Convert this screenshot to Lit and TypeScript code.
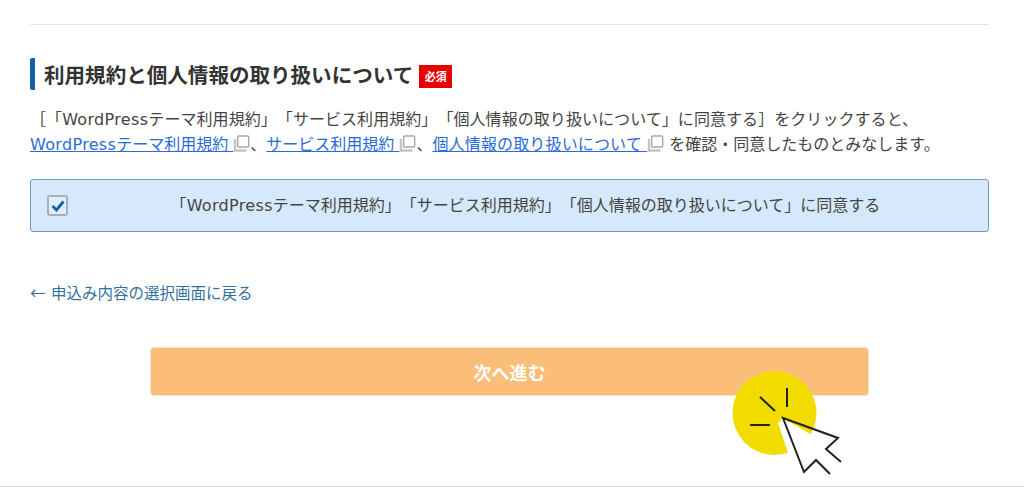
import { LitElement, css, html, svg } from 'lit';
import { customElement } from 'lit/decorators.js';

const copyIcon = svg`<svg class="copy" width="17" height="17" viewBox="0 0 17 17" aria-hidden="true">
  <path d="M2 4v11.5h11.5" fill="none" stroke="#c4c4c4" stroke-width="2.4"/>
  <rect x="4.7" y="1" width="11" height="11" rx="1" fill="#fff" stroke="#a8a8a8" stroke-width="1.4"/>
</svg>`;

const wp = html`<span class="wp">WordPress</span>`;

@customElement('app-root')
export class AppRoot extends LitElement {
  static override styles = css`
    :host {
      display: block;
      position: relative;
      height: 502px;
      overflow: hidden;
      background: #fff;
      font-family: 'DejaVu Sans', 'Noto Sans CJK JP', sans-serif;
      text-spacing-trim: space-all;
      color: #444;
    }
    .page {
      display: flex;
      flex-direction: column;
      height: 487px;
      box-sizing: border-box;
      padding: 24px 35px 0 30px;
      border-bottom: 1px solid #d9d9d9;
    }
    hr {
      margin: 0;
      border: none;
      border-top: 1px solid #e4e4e4;
    }
    .heading {
      display: flex;
      align-items: center;
      height: 32px;
      margin-top: 33px;
      padding-left: 9px;
      border-left: 5px solid #1360a8;
      border-radius: 2px;
    }
    h2 {
      margin: 0;
      padding-top: 4px;
      font-size: 20.55px;
      line-height: 28px;
      font-weight: 700;
      color: #333;
      white-space: nowrap;
    }
    .badge {
      display: flex;
      align-items: center;
      justify-content: center;
      width: 33px;
      height: 23px;
      margin: 4px 0 0 6px;
      background: #e60000;
      color: #fff;
      font-size: 11px;
      font-weight: 700;
      line-height: 1;
      font-family: 'Noto Sans CJK JP', serif;
    }
    .lead {
      margin: 17px 0 0;
      font-size: 16px;
      line-height: 25px;
      white-space: nowrap;
    }
    .first {
      letter-spacing: 0.06px;
    }
    .lead a {
      color: #2b6bd6;
      text-decoration: underline;
      white-space: pre;
    }
    .lead a.long {
      letter-spacing: 0.15px;
    }
    .wp {
      letter-spacing: 0.33px;
    }
    .copy {
      vertical-align: -2px;
    }
    .agree {
      display: flex;
      align-items: center;
      height: 53px;
      box-sizing: border-box;
      margin-top: 22px;
      padding: 0 17px 0 16px;
      background: #d6e8fc;
      border: 1px solid #6a9ad0;
      border-radius: 3px;
    }
    .box {
      display: flex;
      align-items: center;
      justify-content: center;
      flex: none;
      width: 21px;
      height: 21px;
      box-sizing: border-box;
      background: #e3edf9;
      border: 2px solid #a6b0bc;
      border-radius: 3px;
    }
    .label {
      flex: 1;
      text-align: center;
      font-size: 16px;
      line-height: 24px;
      padding-left: 12px;
      white-space: nowrap;
    }
    .back {
      margin-top: 48px;
      font-family: 'Noto Sans CJK JP', sans-serif;
      font-size: 15.5px;
      word-spacing: 2px;
      line-height: 25px;
      color: #33709f;
      text-decoration: none;
    }
    .next {
      display: flex;
      align-items: center;
      justify-content: center;
      align-self: flex-start;
      width: 719px;
      height: 49px;
      margin: 42px 0 0 120px;
      background: #fbbe78;
      border: 1px solid #f5e3d0;
      border-radius: 4px;
      box-sizing: border-box;
      color: #fff;
      font-family: inherit;
      font-size: 18px;
      font-weight: 700;
    }
    .pointer {
      position: absolute;
      left: 730px;
      top: 370px;
    }
  `;

  override render() {
    return html`
      <div class="page">
        <hr />
        <div class="heading">
          <h2>利用規約と個人情報の取り扱いについて</h2>
          <span class="badge">必須</span>
        </div>
        <p class="lead">
          <span class="first">［「${wp}テーマ利用規約」「サービス利用規約」「個人情報の取り扱いについて」に同意する］をクリックすると、</span><br />
          <a href="#">${wp}テーマ利用規約 </a>${copyIcon}、<a href="#">サービス利用規約 </a>${copyIcon}、<a class="long" href="#">個人情報の取り扱いについて </a>${copyIcon} を確認・同意したものとみなします。
        </p>
        <label class="agree">
          <div class="box">
            <svg width="14" height="12" viewBox="0 0 14 12" aria-hidden="true">
              <path d="M1.5 6l4 4 7-8.5" fill="none" stroke="#1360a8" stroke-width="2.8"/>
            </svg>
          </div>
          <span class="label">「${wp}テーマ利用規約」「サービス利用規約」「個人情報の取り扱いについて」に同意する</span>
        </label>
        <a class="back" href="#">← 申込み内容の選択画面に戻る</a>
        <button class="next">次へ進む</button>
      </div>
      <svg class="pointer" width="120" height="110" viewBox="730 370 120 110" aria-hidden="true">
        <circle cx="774.5" cy="413" r="42" fill="#f2dc00"/>
        <path d="M778 423 L789 456 L830 474 L841 462 L838 438 L812 435 L783 418 Z" fill="#fff"/>
        <path d="M830 474 L816 460 L804 472 L783 418 L838 438 L826 449 L841 462" fill="none" stroke="#222" stroke-width="2"/>
        <path d="M787 388V407M760 397L775 411M750 425H770" fill="none" stroke="#222" stroke-width="2"/>
      </svg>
    `;
  }
}

declare global {
  interface HTMLElementTagNameMap {
    'app-root': AppRoot;
  }
}
